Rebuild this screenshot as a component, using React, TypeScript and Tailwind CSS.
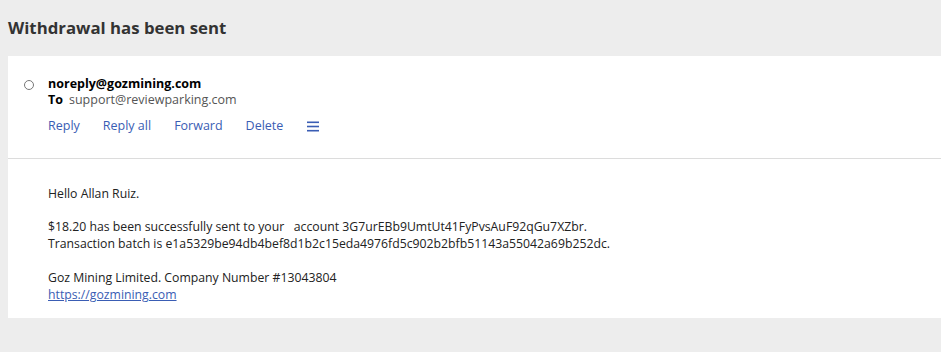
export default function App() {
  return (
    <div className="min-h-[352px] bg-[#ededed] font-['Open_Sans',sans-serif] text-[#222]">
      <div className="flex h-14 items-center pl-2">
        <h1 className="text-[16.8px] font-bold text-[#333]">Withdrawal has been sent</h1>
      </div>

      <div className="ml-2 bg-white">
        <div className="flex h-[103px] border-b border-[#dcdcdc] pt-[20px]">
          <div className="flex w-10 justify-center pt-[4px] pl-[2px]">
            <span className="h-[10px] w-[10px] rounded-full border border-[#777]" />
          </div>
          <div className="flex flex-col">
            <p className="text-[12.5px] leading-[16px] font-bold text-black">noreply@gozmining.com</p>
            <p className="text-[12.5px] leading-[16px] text-[#555]">
              <span className="mr-[6px] font-bold text-black">To</span>support@reviewparking.com
            </p>
            <div className="mt-[9px] flex items-center gap-[23px] text-[12.5px] text-[#3a5db4]">
              <span>Reply</span>
              <span>Reply all</span>
              <span>Forward</span>
              <span>Delete</span>
              <svg width="12" height="11" viewBox="0 0 12 11" className="ml-[1px]">
                <rect x="0" y="0.5" width="12" height="1.6" fill="#3a5db4" />
                <rect x="0" y="4.7" width="12" height="1.6" fill="#3a5db4" />
                <rect x="0" y="8.9" width="12" height="1.6" fill="#3a5db4" />
              </svg>
            </div>
          </div>
        </div>

        <div className="pt-[26px] pb-[15px] pl-10 text-[12.25px] leading-[17px] text-[#222]">
          <p>Hello Allan Ruiz.</p>
          <p className="mt-[16px]">
            $18.20 has been successfully sent to your&nbsp;&nbsp; account 3G7urEBb9UmtUt41FyPvsAuF92qGu7XZbr.
          </p>
          <p>Transaction batch is e1a5329be94db4bef8d1b2c15eda4976fd5c902b2bfb51143a55042a69b252dc.</p>
          <p className="mt-[17px]">Goz Mining Limited. Company Number #13043804</p>
          <a href="#" className="text-[#3a5db4] underline">https://gozmining.com</a>
        </div>
      </div>
    </div>
  )
}
